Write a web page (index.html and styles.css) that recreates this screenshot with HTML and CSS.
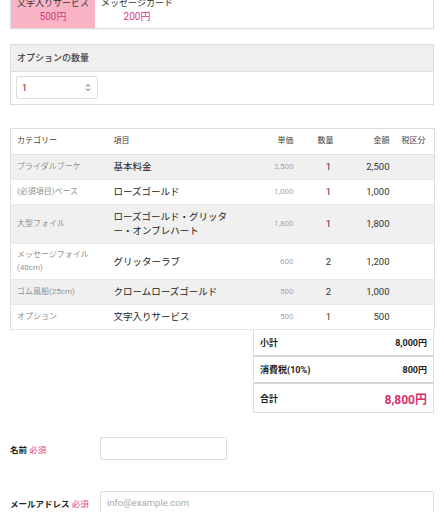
FILE: index.html
```html
<!DOCTYPE html>
<html>
<head>
    <title>ご注文内容</title>
    <meta charset="UTF-8">
    <meta name="viewport" content="width=device-width, initial-scale=1.0">
    <link rel="stylesheet" href="styles.css">
</head>
<body>
    <div class="page">
        <div class="option-card">
            <div class="option-cell selected">
                <div class="option-name">文字入りサービス</div>
                <div class="option-price">500円</div>
            </div>
            <div class="option-cell">
                <div class="option-name">メッセージカード</div>
                <div class="option-price">200円</div>
            </div>
        </div>

        <div class="panel">
            <div class="panel-head">オプションの数量</div>
            <div class="panel-body">
                <div class="qty-select">
                    <span>1</span>
                    <svg width="6" height="9" viewBox="0 0 6 9">
                        <path d="M1 3.5 L3 1.5 L5 3.5 M1 5.5 L3 7.5 L5 5.5" fill="none" stroke="#555" stroke-width="1"/>
                    </svg>
                </div>
            </div>
        </div>

        <table class="order">
            <colgroup>
                <col class="c-cat">
                <col class="c-item">
                <col class="c-price">
                <col class="c-qty">
                <col class="c-amount">
                <col class="c-tax">
            </colgroup>
            <thead>
                <tr>
                    <th>カテゴリー</th>
                    <th>項目</th>
                    <th class="num">単価</th>
                    <th class="qty">数量</th>
                    <th class="num">金額</th>
                    <th>税区分</th>
                </tr>
            </thead>
            <tbody>
                <tr>
                    <td class="cat">ブライダルブーケ</td>
                    <td class="item">基本料金</td>
                    <td class="price">2,500</td>
                    <td class="qty">1</td>
                    <td class="amount">2,500</td>
                    <td></td>
                </tr>
                <tr>
                    <td class="cat">(必須項目)ベース</td>
                    <td class="item">ローズゴールド</td>
                    <td class="price">1,000</td>
                    <td class="qty">1</td>
                    <td class="amount">1,000</td>
                    <td></td>
                </tr>
                <tr>
                    <td class="cat">大型フォイル</td>
                    <td class="item">ローズゴールド・グリッター・オンブレハート</td>
                    <td class="price">1,800</td>
                    <td class="qty">1</td>
                    <td class="amount">1,800</td>
                    <td></td>
                </tr>
                <tr>
                    <td class="cat">メッセージフォイル(40cm)</td>
                    <td class="item">グリッターラブ</td>
                    <td class="price">600</td>
                    <td class="qty">2</td>
                    <td class="amount">1,200</td>
                    <td></td>
                </tr>
                <tr>
                    <td class="cat">ゴム風船(25cm)</td>
                    <td class="item">クロームローズゴールド</td>
                    <td class="price">500</td>
                    <td class="qty">2</td>
                    <td class="amount">1,000</td>
                    <td></td>
                </tr>
                <tr>
                    <td class="cat">オプション</td>
                    <td class="item">文字入りサービス</td>
                    <td class="price">500</td>
                    <td class="qty">1</td>
                    <td class="amount">500</td>
                    <td></td>
                </tr>
            </tbody>
        </table>

        <div class="totals">
            <div class="total-row">
                <span>小計</span>
                <span>8,000円</span>
            </div>
            <div class="total-row tax">
                <span>消費税(10%)</span>
                <span>800円</span>
            </div>
            <div class="total-row grand">
                <span>合計</span>
                <span class="grand-value">8,800円</span>
            </div>
        </div>

        <form class="contact-form">
            <div class="form-row">
                <label>名前 <span class="required">必須</span></label>
                <input type="text" class="input-short">
            </div>
            <div class="form-row">
                <label>メールアドレス <span class="required">必須</span></label>
                <input type="email" class="input-long" placeholder="info@example.com">
            </div>
        </form>
    </div>
</body>
</html>
```

FILE: styles.css
```css
body {
    font-family: Roboto, 'Noto Sans CJK JP', sans-serif;
    background-color: #fff;
    color: #333;
    margin: 0;
    padding: 0;
}
.page {
    padding: 0 10px;
}

/* option picker (scrolled partly out of view) */
.option-card {
    display: flex;
    margin-top: -9px;
    border: 1px solid #ddd;
    box-shadow: 0 1px 2px rgba(0, 0, 0, 0.06);
}
.option-cell {
    width: 84px;
    padding: 4px 0;
    text-align: center;
}
.option-cell.selected {
    background-color: #f8b4c4;
}
.option-name {
    font-size: 9px;
    line-height: 14px;
    color: #333;
}
.option-price {
    font-size: 10px;
    line-height: 14px;
    color: #d63c76;
}

/* quantity panel */
.panel {
    margin-top: 15px;
    border: 1px solid #ddd;
}
.panel-head {
    background-color: #efefef;
    border-bottom: 1px solid #ddd;
    font-size: 9px;
    font-weight: 500;
    line-height: 26px;
    padding: 0 6px;
    color: #444;
}
.panel-body {
    padding: 4px 5px 5px;
}
.qty-select {
    width: 82px;
    height: 23px;
    box-sizing: border-box;
    border: 1px solid #ddd;
    border-radius: 2px;
    display: flex;
    align-items: center;
    justify-content: space-between;
    padding: 0 6px 0 5px;
    font-size: 9px;
}

/* order table */
.order {
    width: 100%;
    margin-top: 23px;
    border-collapse: collapse;
    table-layout: fixed;
    border: 1px solid #ddd;
}
.c-cat { width: 97px; }
.c-item { width: 130px; }
.c-price { width: 62px; }
.c-qty { width: 52px; }
.c-amount { width: 44px; }
.c-tax { width: 39px; }

.order th {
    font-size: 8px;
    font-weight: normal;
    color: #444;
    text-align: left;
    padding: 5px 6px 6px;
    line-height: 14px;
    border-bottom: 1px solid #e2e2e2;
}
.order td {
    padding: 5px 6px;
    line-height: 14px;
    vertical-align: middle;
    border-bottom: 1px solid #e8e8e8;
}
.order tbody tr:nth-child(odd) {
    background-color: #f0f0f0;
}
.order th.num {
    text-align: right;
}
.order .qty {
    text-align: center;
}
.order td.cat {
    font-size: 8px;
    line-height: 12.5px;
    color: #909090;
}
.order td.item {
    font-size: 9.5px;
    color: #222;
}
.order td.price {
    font-size: 8px;
    color: #a8a8a8;
    text-align: right;
}
.order td.qty {
    font-size: 9.5px;
    color: #333;
    padding-left: 9px;
    padding-right: 3px;
}
.order td.amount {
    font-size: 9.5px;
    color: #333;
    text-align: right;
}

/* totals */
.totals {
    width: 181px;
    margin-left: auto;
    box-sizing: border-box;
    border: 1px solid #ddd;
    border-top: none;
}
.total-row {
    display: flex;
    justify-content: space-between;
    align-items: center;
    height: 25px;
    padding: 0 6px 0 6px;
    font-size: 9px;
    font-weight: bold;
    color: #222;
    border-bottom: 2px solid #d6d6d6;
}
.total-row.grand {
    height: 28px;
    border-bottom: none;
}
.grand-value {
    font-size: 12px;
    color: #d6336c;
}

/* contact form */
.contact-form {
    margin-top: 24px;
}
.form-row {
    display: flex;
    align-items: center;
    margin-bottom: 31px;
}
.form-row label {
    width: 90px;
    font-size: 8.5px;
    font-weight: bold;
    color: #222;
}
.required {
    color: #e0457b;
    font-weight: normal;
}
.form-row input {
    box-sizing: border-box;
    border: 1px solid #ddd;
    border-radius: 2px;
    font-family: Roboto, 'Noto Sans CJK JP', sans-serif;
    font-size: 9.5px;
    padding: 0 6px;
    margin: 0;
    outline: none;
}
.input-short {
    width: 127px;
    height: 23px;
}
.input-long {
    width: 334px;
    height: 23px;
}
.input-long::placeholder {
    color: #aaa;
}
```
